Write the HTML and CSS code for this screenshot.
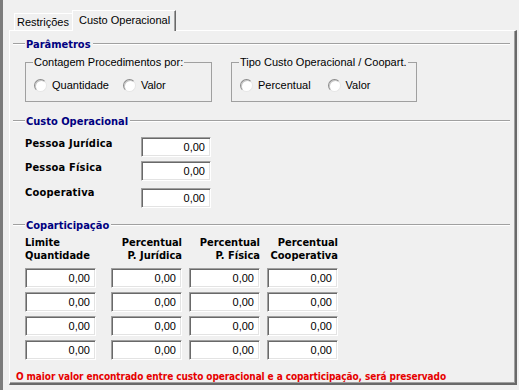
FILE: index.html
```html
<!DOCTYPE html>
<html lang="pt-BR">
<head>
    <meta charset="UTF-8">
    <title>Custo Operacional</title>
    <link rel="stylesheet" href="styles.css">
</head>
<body>
    <div class="janela">
        <div class="abas">
            <div class="aba">Restrições</div>
            <div class="aba ativa">Custo Operacional</div>
        </div>
        <div class="painel">
            <div class="titulo-grupo"><span>Parâmetros</span></div>
            <div class="parametros">
                <fieldset class="caixa caixa-contagem">
                    <legend>Contagem Procedimentos por:</legend>
                    <label class="opcao"><span class="radio"></span>Quantidade</label>
                    <label class="opcao"><span class="radio"></span>Valor</label>
                </fieldset>
                <fieldset class="caixa caixa-tipo">
                    <legend>Tipo Custo Operacional / Coopart.</legend>
                    <label class="opcao"><span class="radio"></span>Percentual</label>
                    <label class="opcao"><span class="radio"></span>Valor</label>
                </fieldset>
            </div>

            <div class="titulo-grupo grupo-custo"><span>Custo Operacional</span></div>
            <div class="linha-custo linha-pj">
                <span class="rotulo">Pessoa Jurídica</span>
                <div class="campo">0,00</div>
            </div>
            <div class="linha-custo linha-pf">
                <span class="rotulo">Pessoa Física</span>
                <div class="campo">0,00</div>
            </div>
            <div class="linha-custo linha-coop">
                <span class="rotulo">Cooperativa</span>
                <div class="campo">0,00</div>
            </div>

            <div class="titulo-grupo grupo-copart"><span>Coparticipação</span></div>
            <div class="grade">
                <div class="cab esquerda">Limite<br>Quantidade</div>
                <div class="cab">Percentual<br>P. Jurídica</div>
                <div class="cab">Percentual<br>P. Física</div>
                <div class="cab">Percentual<br>Cooperativa</div>
                <div class="campo">0,00</div><div class="campo">0,00</div><div class="campo">0,00</div><div class="campo">0,00</div>
                <div class="campo">0,00</div><div class="campo">0,00</div><div class="campo">0,00</div><div class="campo">0,00</div>
                <div class="campo">0,00</div><div class="campo">0,00</div><div class="campo">0,00</div><div class="campo">0,00</div>
                <div class="campo">0,00</div><div class="campo">0,00</div><div class="campo">0,00</div><div class="campo">0,00</div>
            </div>
            <p class="aviso">O maior valor encontrado entre custo operacional e a coparticipação, será preservado</p>
        </div>
    </div>
</body>
</html>
```

FILE: styles.css
```css
body {
    margin: 0;
    background-color: #f0f0f0;
    font-family: "Liberation Sans", Arial, sans-serif;
    font-size: 11px;
    color: #000;
}

.janela {
    height: 390px;
    border-left: 3px solid #7c7c7c;
    box-sizing: border-box;
    padding-top: 10px;
}

/* abas */
.abas {
    display: flex;
    align-items: flex-end;
    height: 20px;
    margin-left: 11px;
}

.aba {
    height: 17px;
    line-height: 17px;
    padding: 0 3px 0 2px;
    border-top: 1px solid #fff;
    border-left: 1px solid #fff;
    box-sizing: border-box;
}

.aba.ativa {
    position: relative;
    z-index: 1;
    height: 21px;
    line-height: 19px;
    margin-bottom: -1px;
    padding: 0 5px 0 6px;
    background-color: #f0f0f0;
    border-right: 1px solid #696969;
    box-shadow: inset -1px 0 #a0a0a0;
}

/* painel */
.painel {
    margin-left: 6px;
    width: 508px;
    height: 355px;
    box-sizing: border-box;
    border-top: 1px solid #fff;
    border-left: 1px solid #fff;
    border-right: 2px solid #696969;
    border-bottom: 2px solid #696969;
    box-shadow: inset -1px -1px #a0a0a0;
    padding: 0 5px 0 3px;
}

.titulo-grupo {
    display: flex;
    align-items: center;
    height: 14px;
    margin-top: 6px;
    color: #000080;
    font-family: "DejaVu Sans Condensed", "DejaVu Sans", sans-serif;
    font-stretch: condensed;
    font-weight: bold;
    font-size: 11px;
}

.titulo-grupo::before,
.titulo-grupo::after {
    content: "";
    height: 1px;
    background-color: #a0a0a0;
    border-bottom: 1px solid #fff;
}

.titulo-grupo::before {
    width: 12px;
    margin-right: 1px;
}

.titulo-grupo::after {
    flex: 1;
    margin-left: 2px;
}

/* parametros */
.parametros {
    display: flex;
    gap: 19px;
    margin: 4px 0 0 12px;
}

.caixa {
    margin: 0;
    padding: 9px 0 0 8px;
    height: 47px;
    box-sizing: border-box;
    border: 1px solid #a0a0a0;
    display: flex;
    gap: 14px;
    align-items: flex-start;
}

.caixa legend {
    padding: 0 1px;
    margin-left: -1px;
    line-height: 14px;
}

.caixa-contagem {
    width: 187px;
}

.caixa-tipo {
    width: 186px;
    gap: 17px;
}

.opcao {
    display: flex;
    align-items: center;
    gap: 5px;
    line-height: 14px;
}

.radio {
    width: 11px;
    height: 11px;
    border-radius: 50%;
    background-color: #fff;
    border: 1px solid;
    border-color: #8a8a8a #e6e6e6 #e6e6e6 #8a8a8a;
    box-shadow: inset 1px 1px #c8c8c8;
}

/* custo operacional */
.grupo-custo {
    margin-top: 12px;
}

.linha-custo {
    display: flex;
    align-items: flex-end;
    height: 20px;
    margin-left: 12px;
}

.rotulo {
    width: 116px;
    line-height: 14px;
    padding-bottom: 6px;
    font-family: "DejaVu Sans Condensed", "DejaVu Sans", sans-serif;
    font-stretch: condensed;
    font-weight: bold;
    letter-spacing: 0.2px;
}

.linha-pj {
    margin-top: 9px;
}

.linha-pf {
    margin-top: 4px;
}

.linha-coop {
    margin-top: 7px;
}

.linha-coop .rotulo {
    padding-bottom: 8px;
}

.campo {
    width: 70px;
    height: 20px;
    box-sizing: border-box;
    background-color: #fff;
    border: 1px solid;
    border-color: #a0a0a0 #fff #fff #a0a0a0;
    box-shadow: inset 1px 1px #696969, inset -1px -1px #e3e3e3;
    text-align: right;
    padding-right: 5px;
    line-height: 19px;
}

/* coparticipacao */
.grupo-copart {
    margin-top: 10px;
}

.grade {
    display: grid;
    grid-template-columns: 79px 71px 71px 71px;
    column-gap: 7px;
    row-gap: 4px;
    margin: 4px 0 0 12px;
}

.grade .campo {
    width: 71px;
}

.cab {
    font-family: "DejaVu Sans Condensed", "DejaVu Sans", sans-serif;
    font-stretch: condensed;
    font-weight: bold;
    text-align: right;
    line-height: 13px;
    margin-bottom: 2px;
}

.cab.esquerda {
    text-align: left;
}

.aviso {
    margin: 11px 0 0 3px;
    color: #e60000;
    font-family: "DejaVu Sans Condensed", "DejaVu Sans", sans-serif;
    font-stretch: condensed;
    font-weight: bold;
    font-size: 10px;
    letter-spacing: -0.1px;
}
```
